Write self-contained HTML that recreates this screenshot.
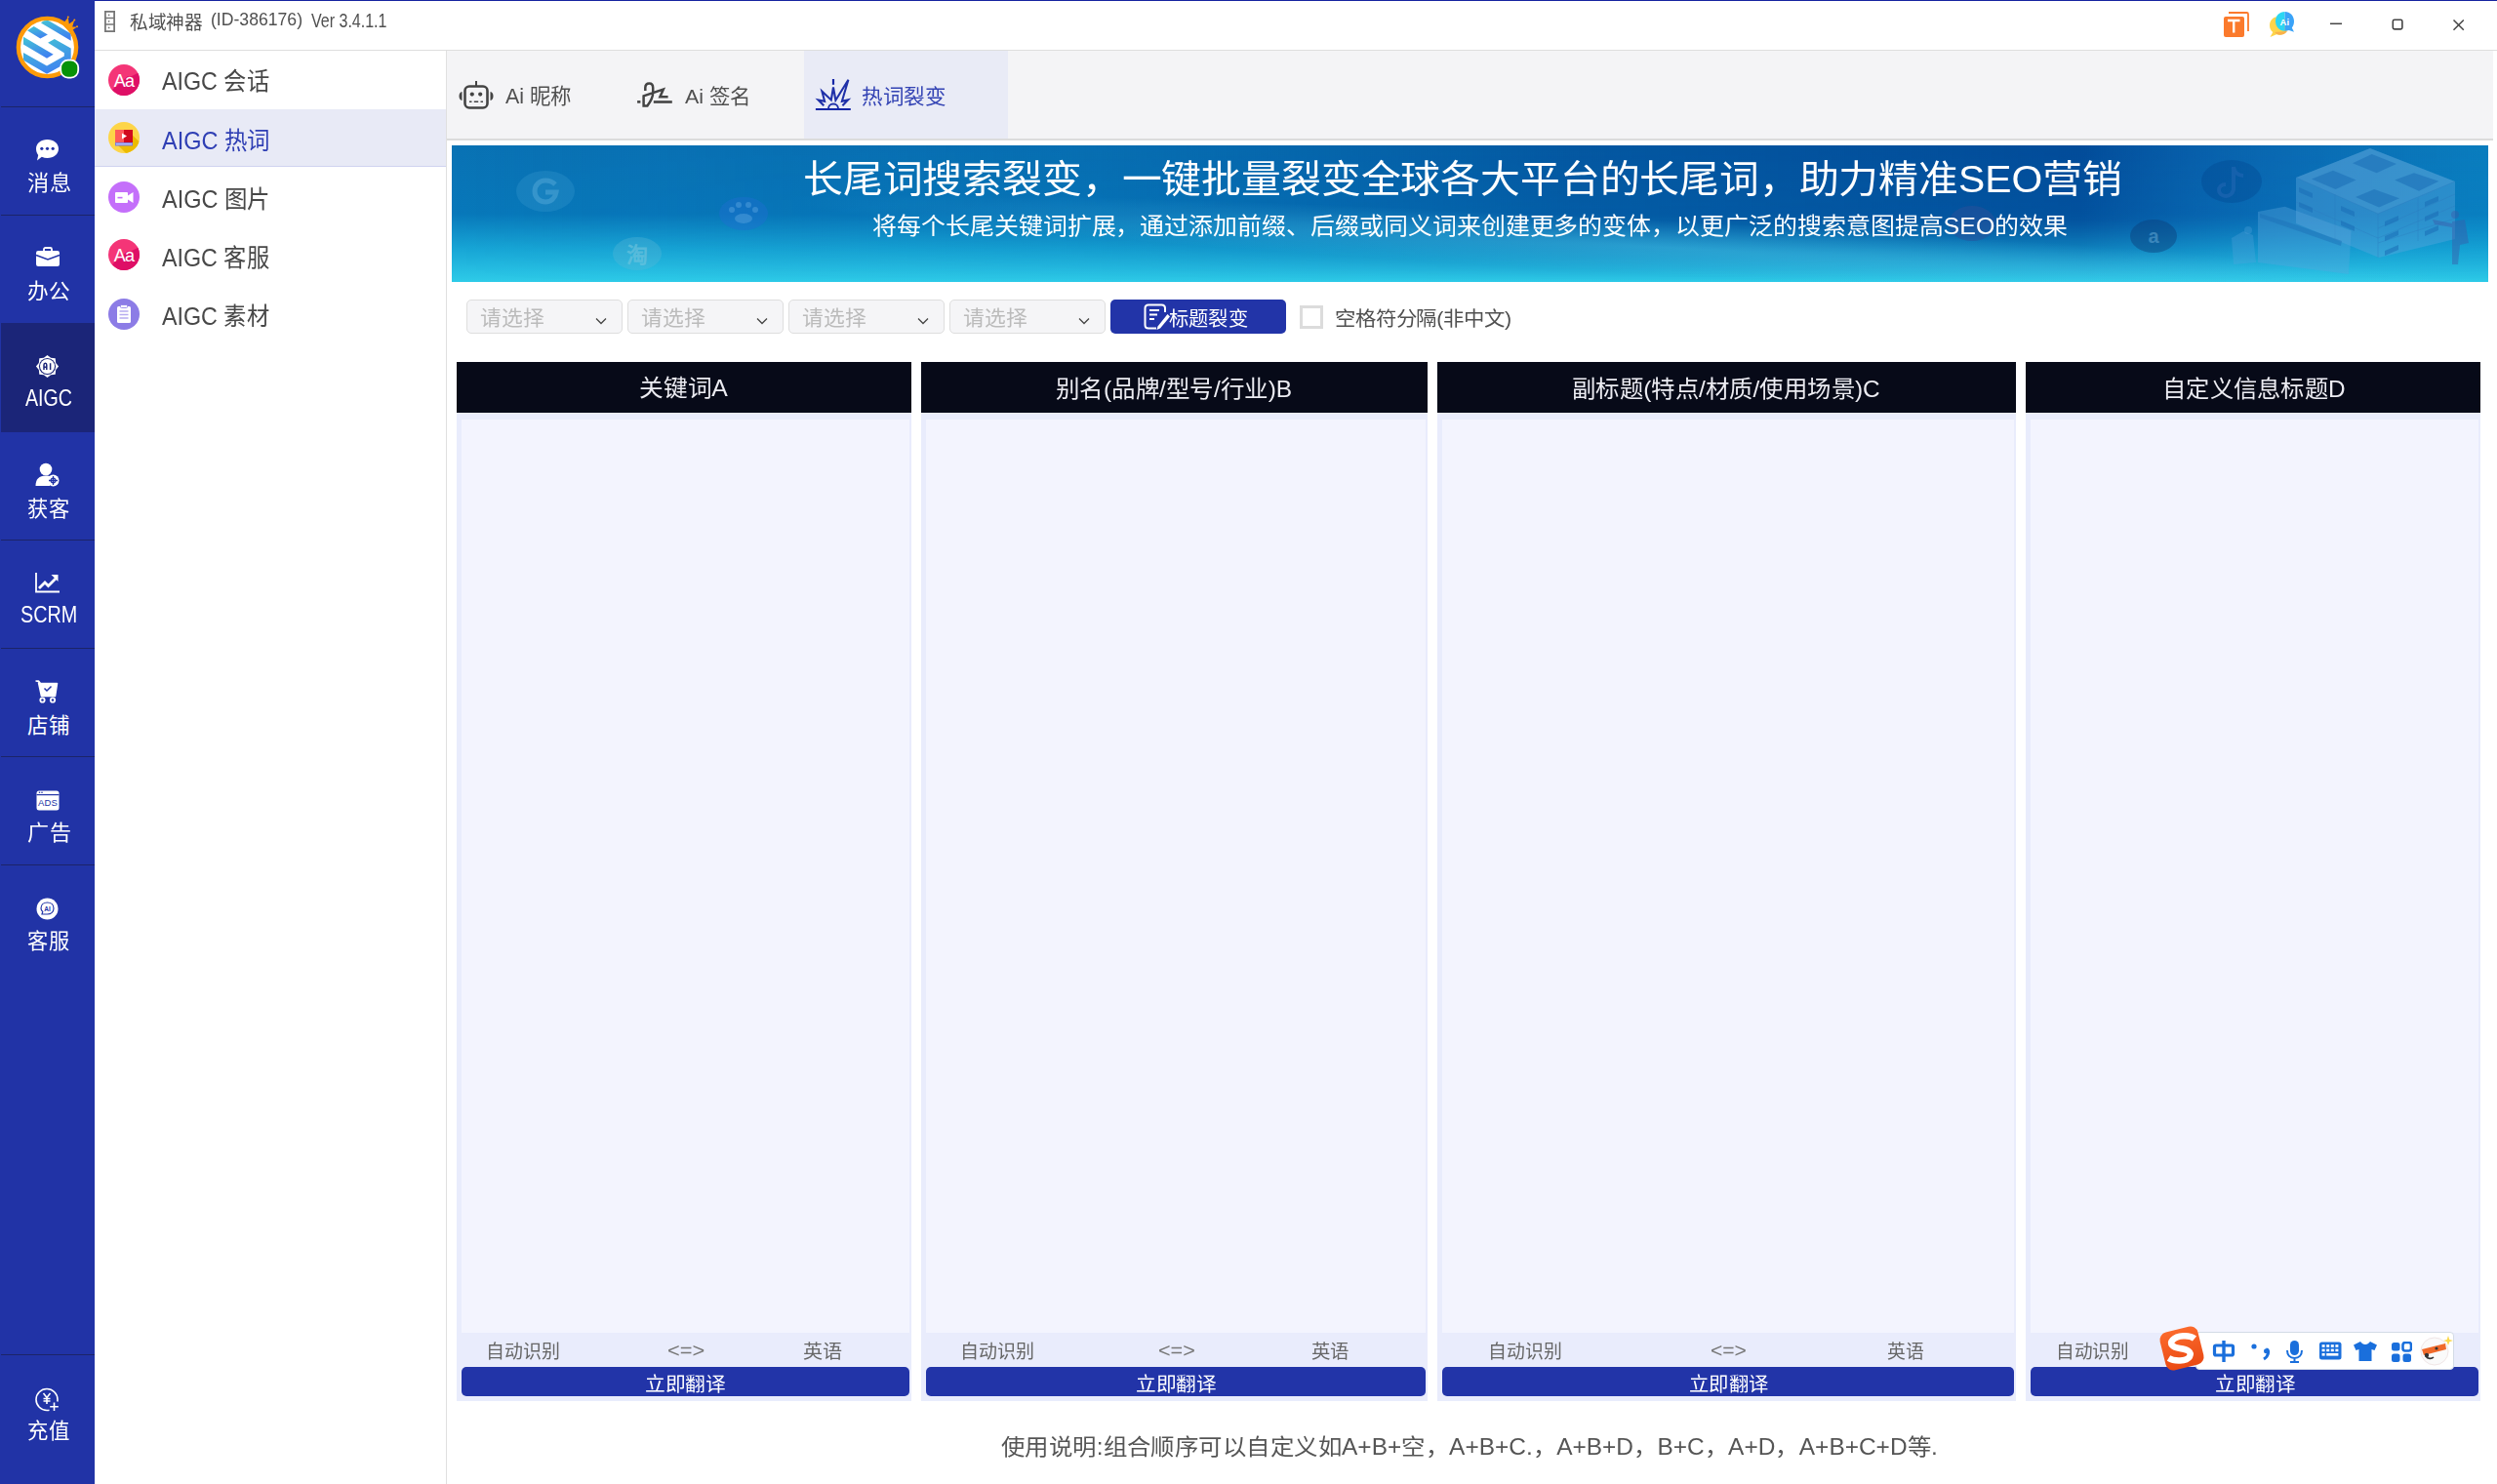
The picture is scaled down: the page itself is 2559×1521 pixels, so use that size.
<!DOCTYPE html>
<html lang="zh-CN"><head><meta charset="utf-8">
<style>
*{margin:0;padding:0;box-sizing:border-box}
html,body{width:2559px;height:1521px;overflow:hidden;background:#fff;font-family:"Liberation Sans",sans-serif;position:relative}
.abs{position:absolute}
svg{display:block}
#side{left:0;top:0;width:97px;height:1521px;background:#2133a6}
.sep{position:absolute;left:1px;width:96px;height:1px;background:#1c2468}
#side .lbl{position:absolute;left:0;width:97px;font-size:22px;line-height:26px;color:#fff;text-align:center;white-space:nowrap}
#topline{left:97px;top:0;width:2462px;height:1px;background:#1624a0}
#title{left:134px;top:9px;font-size:19px;line-height:24px;color:#444;white-space:nowrap}
#titlesep{left:97px;top:51px;width:2462px;height:1px;background:#dedede}
#sub{left:97px;top:52px;width:361px;height:1469px;background:#fff;border-right:1px solid #e0e0e0}
.si{position:absolute;left:0;width:360px;height:60px}
.si .t{position:absolute;left:69px;font-size:26px;line-height:30px;color:#383838;white-space:nowrap}
#tabs{left:458px;top:52px;width:2097px;height:92px;background:#f4f4f6;border-bottom:2px solid #dcdcdc}
.tab .t{position:absolute;font-size:22px;line-height:26px;color:#444;white-space:nowrap}
#banner{left:463px;top:149px;width:2087px;height:140px;background:linear-gradient(180deg,#0060a8 0%,#0672b4 40%,#14a0d2 78%,#2cc6e4 100%);overflow:hidden}
.sel{position:absolute;top:307px;width:160px;height:35px;border:1px solid #dedede;border-radius:5px;background:#f5f5f7}
.sel .t{position:absolute;left:15px;top:4px;font-size:21px;line-height:26px;color:#b0b0b0;white-space:nowrap}
.sel svg{position:absolute;left:131px;top:17px}
.col{position:absolute;top:371px;height:1065px;background:#e9ecfc}
.col .hd{position:absolute;left:0;top:0;right:0;height:52px;background:#070a18;color:#fff;font-size:24px;text-align:center;line-height:52px;white-space:nowrap}
.col .ta{position:absolute;left:5px;right:2px;top:59px;height:936px;background:#f3f4fe}
.col .lang{position:absolute;top:1004px;font-size:19px;line-height:22px;color:#555;white-space:nowrap}
.col .btn{position:absolute;left:5px;right:2px;top:1030px;height:30px;background:#2234a8;border-radius:5px;color:#fff;font-size:21px;text-align:center;line-height:30px;white-space:nowrap}
#foot{left:458px;top:1468px;width:2101px;text-align:center;font-size:24px;line-height:28px;color:#484848;white-space:nowrap}
.tx{position:absolute;line-height:1;white-space:nowrap;transform-origin:0 0}
</style></head><body>
<div id="side" class="abs">
 <svg class="abs" style="left:0;top:0" width="97" height="100" viewBox="0 0 97 100">
  <defs><linearGradient id="lg1" x1="0.3" y1="0" x2="0.7" y2="1"><stop offset="0" stop-color="#43c0d6"/><stop offset="1" stop-color="#3f7ef2"/></linearGradient>
  <clipPath id="cc"><circle cx="48.5" cy="48.5" r="27.6"/></clipPath></defs>
  <circle cx="48.5" cy="48.5" r="29.6" fill="#fff" stroke="#fd9a08" stroke-width="4.4"/>
  <g clip-path="url(#cc)" fill="url(#lg1)">
   <polygon points="42,23.6 47,19.5 72.7,34.5 72.7,41.8"/>
   <polygon points="28,31.3 34.7,27.1 48.9,35.4 41.4,39.6"/>
   <polygon points="24,37.8 54.7,55.8 48,59.8 24,45.6"/>
   <polygon points="24,54 48,67.6 65.8,57.6 65.8,54.3 49.1,43.8 55.8,40 72.7,49.4 72.7,62 48,75.8 24,61.8"/>
  </g>
  <path d="M64,25 L69.8,17.8 L70.8,24.5 L76.3,20.6 L74.2,27.5 L79,27.4 L71.5,33 Z" fill="#fd9a08"/>
  <circle cx="69.8" cy="17.4" r="1.0" fill="#fd9a08"/><circle cx="76.3" cy="20.4" r="1.0" fill="#fd9a08"/><circle cx="79" cy="27.3" r="1.0" fill="#fd9a08"/>
  <rect x="62.2" y="61.6" width="18" height="18" rx="7.5" fill="#079207" stroke="#fff" stroke-width="1.8"/>
 </svg>
 <div class="sep" style="top:109px"></div>
 <div class="sep" style="top:220px"></div>
 <div class="abs" style="left:1px;top:331px;width:96px;height:112px;background:#1b2578"></div>
 <div class="sep" style="top:553px"></div>
 <div class="sep" style="top:664px"></div>
 <div class="sep" style="top:775px"></div>
 <div class="sep" style="top:886px"></div>
 <div class="sep" style="top:1388px"></div>
 <!-- 消息 -->
 <svg class="abs" style="left:36px;top:142px" width="25" height="23" viewBox="0 0 25 23"><path d="M12.5,1 C19,1 24,5 24,10.5 C24,16 19,20 12.5,20 C10.5,20 8.5,19.6 6.8,18.8 L2,22.5 L3.2,17 C1.8,15.3 1,13 1,10.5 C1,5 6,1 12.5,1 Z" fill="#fff"/><circle cx="6.8" cy="10.3" r="1.6" fill="#2133a6"/><circle cx="12.5" cy="10.3" r="1.6" fill="#2133a6"/><circle cx="18.2" cy="10.3" r="1.6" fill="#2133a6"/></svg>
 <!-- 办公 -->
 <svg class="abs" style="left:36px;top:253px" width="26" height="21" viewBox="0 0 26 21"><path d="M9,4 V2.5 C9,1.5 9.7,1 10.5,1 H15.5 C16.3,1 17,1.5 17,2.5 V4" fill="none" stroke="#fff" stroke-width="1.8"/><rect x="1" y="4" width="24" height="16" rx="2.2" fill="#fff"/><path d="M1,8.5 L13,13 L25,8.5" fill="none" stroke="#2133a6" stroke-width="1.4"/></svg>
 <!-- AIGC -->
 <svg class="abs" style="left:32px;top:358px" width="34" height="34" viewBox="0 0 34 34"><polygon points="16.50,5.90 20.10,8.82 24.70,9.30 25.18,13.90 28.10,17.50 25.18,21.10 24.70,25.70 20.10,26.18 16.50,29.10 12.90,26.18 8.30,25.70 7.82,21.10 4.90,17.50 7.82,13.90 8.30,9.30 12.90,8.82" fill="#fff"/><circle cx="16.5" cy="17.5" r="8.6" fill="#1b2578"/><circle cx="16.5" cy="17.5" r="7.5" fill="#fff"/><path d="M13,21 V16 C13,14.8 13.7,14.2 14.4,14.2 C15.1,14.2 15.8,14.8 15.8,16 V21 M13,18.3 H15.8 M19.6,14.2 V21" fill="none" stroke="#1b2578" stroke-width="1.5"/></svg>
<!-- 获客 -->
 <svg class="abs" style="left:36px;top:474px" width="25" height="25" viewBox="0 0 25 25"><circle cx="11" cy="7" r="6.3" fill="#fff"/><path d="M0.5,24 C0.5,17 4,13.5 11,13.5 C13,13.5 14.5,13.8 15.8,14.4 L15,24 Z" fill="#fff"/><circle cx="18.5" cy="18.5" r="6" fill="#fff"/><path d="M18.5,14 V23 M14,18.5 H23" stroke="#2133a6" stroke-width="1.3"/><circle cx="18.5" cy="18.5" r="2.3" fill="none" stroke="#2133a6" stroke-width="1.2"/></svg>
 <!-- SCRM -->
 <svg class="abs" style="left:36px;top:587px" width="26" height="21" viewBox="0 0 26 21"><path d="M1,0 V19.5 H25" fill="none" stroke="#fff" stroke-width="1.8"/><path d="M4,16 L10,10 L13.5,13.5 L21,6" fill="none" stroke="#fff" stroke-width="2.8"/><path d="M16.5,2 H23.5 V9 Z" fill="#fff"/></svg>
 <!-- 店铺 -->
 <svg class="abs" style="left:36px;top:697px" width="24" height="24" viewBox="0 0 24 24"><path d="M0.5,1 H3.5 L5.5,3.5 H22.5 L20.5,16.5 H6.5 L3.5,2.5" fill="#fff" stroke="#fff" stroke-width="1.6" stroke-linejoin="round"/><path d="M9.5,8.5 L12,11 L16.5,6.5" fill="none" stroke="#2133a6" stroke-width="1.5"/><circle cx="7.5" cy="20.5" r="2.2" fill="#2133a6" stroke="#fff" stroke-width="1.8"/><circle cx="18" cy="20.5" r="2.2" fill="#2133a6" stroke="#fff" stroke-width="1.8"/></svg>
 <!-- 广告 -->
 <svg class="abs" style="left:37px;top:810px" width="24" height="21" viewBox="0 0 24 21"><rect x="0.5" y="0.5" width="23" height="20" rx="2.5" fill="#fff"/><rect x="0.5" y="4" width="23" height="1.2" fill="#2133a6"/><circle cx="3.5" cy="2.3" r="0.8" fill="#2133a6"/><circle cx="6" cy="2.3" r="0.8" fill="#2133a6"/><text x="12" y="16.3" font-size="9.5" text-anchor="middle" fill="#2133a6" font-family="Liberation Sans" letter-spacing="0.2">ADS</text></svg>
 <!-- 客服 -->
 <svg class="abs" style="left:37px;top:920px" width="23" height="23" viewBox="0 0 23 23"><circle cx="11.5" cy="11.5" r="11" fill="#fff"/><path d="M11.5,5 C15.5,5 18,7.7 18,11 C18,14.5 15.3,17 11.5,17 H6 L6.8,14.5 C5.6,13.5 5,12.3 5,11 C5,7.7 7.5,5 11.5,5 Z" fill="none" stroke="#2133a6" stroke-width="1.2"/><text x="11.6" y="13.8" font-size="6.5" font-weight="bold" text-anchor="middle" fill="#2133a6" font-family="Liberation Sans">AI</text></svg>
 <!-- 充值 -->
 <svg class="abs" style="left:36px;top:1422px" width="25" height="25" viewBox="0 0 25 25"><path d="M14.5,23.3 C13.7,23.5 12.9,23.5 12,23.5 C6,23.5 1,18.5 1,12.5 C1,6.5 6,1.5 12,1.5 C18,1.5 23,6.5 23,12.5 C23,13.2 23,13.9 22.8,14.5" fill="none" stroke="#fff" stroke-width="1.6"/><path d="M8.5,6 L12,10.5 L15.5,6 M12,10.5 V17 M8.5,11.5 H15.5 M8.5,14 H15.5" fill="none" stroke="#fff" stroke-width="1.6"/><path d="M19.5,15.5 V24 M15.2,19.8 H23.8" stroke="#fff" stroke-width="1.6"/></svg>
</div>
<div id="topline" class="abs"></div>
<div id="titlesep" class="abs"></div>
<svg class="abs" style="left:107px;top:11px" width="11" height="22" viewBox="0 0 11 22"><rect x="0.9" y="0.9" width="9.2" height="20.2" fill="none" stroke="#777" stroke-width="1.8"/><path d="M1,7.4 H10 M1,14 H10" stroke="#777" stroke-width="1.5"/><circle cx="4.6" cy="4.3" r="0.9" fill="#777"/><circle cx="4.6" cy="10.8" r="0.9" fill="#777"/><circle cx="4.6" cy="17.4" r="0.9" fill="#777"/></svg>
<!-- T icon -->
<svg class="abs" style="left:2278px;top:11px" width="28" height="28" viewBox="0 0 28 28"><path d="M6,2 H24.5 C25.5,2 26,2.5 26,3.5 V21" fill="none" stroke="#fb7a2c" stroke-width="1.8"/><rect x="1" y="6" width="21" height="21" rx="2" fill="#fb7a2c"/><path d="M5,10 H17.5 M11.2,10 V22.5" stroke="#fff" stroke-width="2.4"/></svg>
<!-- Ai bubble -->
<svg class="abs" style="left:2325px;top:11px" width="28" height="28" viewBox="0 0 28 28"><path d="M10,6 C4.5,6 1,10 1,15 C1,18 2.2,20.4 4.3,22 L1.5,27 L8,24.3 C9,24.6 10,24.8 11,24.8 C16.5,24.8 20,20.5 20,15 C20,10 15.5,6 10,6 Z" fill="#fdd44a"/><path d="M6,22 C7.6,23.6 9.4,24.6 11.5,24.8 C15,24.8 17.5,23.2 19,21 Z" fill="#f9b14a"/><path d="M16.5,1 C10.9,1 7,5.3 7,10.8 C7,16.3 10.9,20.8 16.5,20.8 L16.5,20.8 Z" fill="#2bd6f2"/><path d="M16.5,1 C22.1,1 26,5.3 26,10.8 C26,13.5 25.2,15.8 23.8,17.6 L26,21.8 L20.8,20 C19.4,20.5 18,20.8 16.5,20.8 Z" fill="#3aa3f8"/><text x="16.3" y="14.8" font-size="9.5" font-weight="bold" text-anchor="middle" fill="#fff" font-family="Liberation Sans">Ai</text></svg>
<!-- min/max/close -->
<svg class="abs" style="left:2386px;top:16px" width="16" height="18" viewBox="0 0 16 18"><path d="M2,8.3 H14" stroke="#444" stroke-width="1.5"/></svg>
<svg class="abs" style="left:2450px;top:18px" width="14" height="14" viewBox="0 0 14 14"><rect x="2.3" y="2.3" width="9.6" height="9.6" rx="1.6" fill="none" stroke="#444" stroke-width="1.6"/></svg>
<svg class="abs" style="left:2512px;top:18px" width="15" height="15" viewBox="0 0 15 15"><path d="M2.5,2.5 L12.8,12.8 M12.8,2.5 L2.5,12.8" stroke="#444" stroke-width="1.5"/></svg>
<div id="sub" class="abs"></div>
<div class="abs" style="left:97px;top:112px;width:360px;height:59px;background:#e8eaf6;border-bottom:1px solid #cfd3ef"></div>
<!-- icons -->
<svg class="abs" style="left:111px;top:66px" width="32" height="32" viewBox="0 0 32 32"><defs><clipPath id="c1"><circle cx="16" cy="16" r="16"/></clipPath></defs><circle cx="16" cy="16" r="16" fill="#f43577"/><path d="M16,16 L32,32 L32,8 Z M4,26 L24,44 L40,30 L20,12 Z" fill="#de0f66" clip-path="url(#c1)"/><text x="16" y="22.5" font-size="18" text-anchor="middle" fill="#fff" font-family="Liberation Sans" letter-spacing="-0.8">Aa</text></svg>
<svg class="abs" style="left:111px;top:125px" width="32" height="32" viewBox="0 0 32 32"><defs><clipPath id="c2"><circle cx="16" cy="16" r="16"/></clipPath></defs><circle cx="16" cy="16" r="16" fill="#fdd548"/><path d="M20,9 L40,28 L26,40 L8,22 Z" fill="#ecbb00" clip-path="url(#c2)"/><rect x="7" y="8" width="18" height="13" fill="#fe5a5a"/><rect x="16" y="8" width="9" height="13" fill="#d10a1e"/><path d="M14,11.5 L19,14.5 L14,17.5 Z" fill="#fff"/><rect x="7" y="21" width="18" height="3.5" fill="#7a7ee0"/><rect x="8" y="22" width="16" height="1.4" fill="#b9bdf5"/></svg>
<svg class="abs" style="left:111px;top:186px" width="32" height="32" viewBox="0 0 32 32"><circle cx="16" cy="16" r="16" fill="#c46ffa"/><rect x="7" y="11" width="13" height="11" rx="1" fill="#fff"/><path d="M20,14.5 L25.5,11 V22 L20,18.5 Z" fill="#fff"/><rect x="9.5" y="15.8" width="5" height="1.6" fill="#c46ffa"/></svg>
<svg class="abs" style="left:111px;top:245px" width="32" height="32" viewBox="0 0 32 32"><defs><clipPath id="c4"><circle cx="16" cy="16" r="16"/></clipPath></defs><circle cx="16" cy="16" r="16" fill="#f43577"/><path d="M16,16 L32,32 L32,8 Z M4,26 L24,44 L40,30 L20,12 Z" fill="#de0f66" clip-path="url(#c4)"/><text x="16" y="22.5" font-size="18" text-anchor="middle" fill="#fff" font-family="Liberation Sans" letter-spacing="-0.8">Aa</text></svg>
<svg class="abs" style="left:111px;top:306px" width="32" height="32" viewBox="0 0 32 32"><circle cx="16" cy="16" r="16" fill="#8c7ce6"/><rect x="9" y="8" width="14" height="17" rx="1.5" fill="#fff"/><rect x="12.5" y="6.5" width="7" height="3" rx="1" fill="#fff" stroke="#8c7ce6" stroke-width="0.8"/><path d="M11.5,13 H20.5 M11.5,16.5 H20.5 M11.5,20 H20.5" stroke="#b7acf0" stroke-width="1.3"/></svg>
<div id="tabs" class="abs"></div>
<div class="abs" style="left:824px;top:52px;width:209px;height:90px;background:#e9ebf6"></div>
<!-- robot -->
<svg class="abs" style="left:469px;top:82px" width="38" height="30" viewBox="0 0 38 30"><path d="M19,1 V6" stroke="#444" stroke-width="2"/><rect x="7.5" y="6.5" width="23" height="22" rx="4.5" fill="none" stroke="#444" stroke-width="2.6"/><path d="M4.5,12 C2.5,12.5 1.5,14 1.5,16.5 C1.5,19 2.5,20.5 4.5,21 Z M33.5,12 C35.5,12.5 36.5,14 36.5,16.5 C36.5,19 35.5,20.5 33.5,21 Z" fill="#444"/><circle cx="14.8" cy="14.6" r="2.1" fill="#444"/><circle cx="23.2" cy="14.6" r="2.1" fill="#444"/><path d="M12,22.2 H14.5 M16.8,22.2 H21.2 M23.5,22.2 H26" stroke="#444" stroke-width="1.5"/></svg>
<!-- signature -->
<svg class="abs" style="left:648px;top:78px" width="48" height="38" viewBox="0 0 48 38"><rect x="5.1" y="25.1" width="3.3" height="2.6" fill="#444"/><path d="M13.3,15 V12 C13.3,9 15,7.4 17.4,7.4 C20,7.4 21.2,9.5 21.2,12 V17 C21.2,21 18,27 15.4,30.5 H11.6 V20.3 L31.8,13.6 L28.4,21.2 H36.6" fill="none" stroke="#444" stroke-width="2.5" stroke-linejoin="miter"/><path d="M21.8,26.5 H40.8" stroke="#444" stroke-width="2.6"/></svg>
<!-- burst -->
<svg class="abs" style="left:830px;top:76px" width="48" height="40" viewBox="0 0 48 40"><path d="M24,5 V10.8" stroke="#1526a6" stroke-width="2.2"/><path d="M14.3,32.3 L8.6,26.4 L15.1,27.8 L12.4,17.5 L21.8,26.4 L24,13.5 L26.4,26.7 L39.4,5.7 L32.9,27.8 L39.1,26.4 L33.4,32.3" fill="none" stroke="#1f30a8" stroke-width="2.1" stroke-linejoin="miter"/><path d="M18.9,35.8 C18.9,32.5 21.2,30.5 24,30.5 C26.8,30.5 29.1,32.5 29.1,35.8" fill="none" stroke="#1f30a8" stroke-width="1.9"/><path d="M5.9,36 H41.8" stroke="#1526a6" stroke-width="2.2"/></svg>
<div id="banner" class="abs">
<svg width="2087" height="140" viewBox="0 0 2087 140" style="position:absolute;left:0;top:0">
 <defs>
  <linearGradient id="bg1" x1="0" y1="0" x2="0" y2="1">
   <stop offset="0" stop-color="#0a72b4"/><stop offset="0.5" stop-color="#0878ba"/><stop offset="0.76" stop-color="#18a6d6"/><stop offset="1" stop-color="#2ecbe8"/>
  </linearGradient>
  <linearGradient id="bg2" x1="0" y1="0" x2="1" y2="0">
   <stop offset="0" stop-color="#0062aa" stop-opacity="0"/><stop offset="0.3" stop-color="#0062aa" stop-opacity="0.25"/><stop offset="0.55" stop-color="#004594" stop-opacity="0.6"/><stop offset="0.8" stop-color="#003f90" stop-opacity="0.75"/><stop offset="0.9" stop-color="#0a5cb0" stop-opacity="0.4"/><stop offset="1" stop-color="#0a90d0" stop-opacity="0.35"/>
  </linearGradient>
  <linearGradient id="bg3" x1="0" y1="0" x2="0" y2="1">
   <stop offset="0" stop-color="#fff" stop-opacity="1"/><stop offset="0.55" stop-color="#fff" stop-opacity="0.9"/><stop offset="1" stop-color="#fff" stop-opacity="0"/>
  </linearGradient>
  <mask id="m1"><rect width="2087" height="140" fill="url(#bg3)"/></mask>
  <radialGradient id="wave" cx="0.5" cy="0.5" r="0.5"><stop offset="0" stop-color="#5ad0f0" stop-opacity="0.35"/><stop offset="1" stop-color="#5ad0f0" stop-opacity="0"/></radialGradient>
 </defs>
 <rect width="2087" height="140" fill="url(#bg1)"/>
 <rect width="2087" height="140" fill="url(#bg2)" mask="url(#m1)"/>
 <ellipse cx="1250" cy="105" rx="900" ry="28" fill="url(#wave)" transform="rotate(3 1250 105)"/>
 <!-- google -->
 <ellipse cx="96" cy="47" rx="30" ry="21" fill="#3a9ad0" fill-opacity="0.3"/>
 <path d="M106,40 C103,37 100,36 96,36 C89.5,36 85,41 85,47 C85,53 89.5,58 96,58 C102,58 106,54 107,48 H96" fill="none" stroke="#5aaedc" stroke-opacity="0.45" stroke-width="5"/>
<!-- baidu -->
 <ellipse cx="299" cy="70" rx="25" ry="17" fill="#1f6fd0" fill-opacity="0.45"/>
 <g fill="#4a9ad8" fill-opacity="0.6"><circle cx="287" cy="66" r="3"/><circle cx="294" cy="61" r="3"/><circle cx="304" cy="61" r="3"/><circle cx="311" cy="66" r="3"/><ellipse cx="299" cy="75" rx="9" ry="5"/></g>
 <!-- taobao -->
 <ellipse cx="190" cy="111" rx="25" ry="17" fill="#5ab8d8" fill-opacity="0.35"/>
 <text x="190" y="120" font-size="22" text-anchor="middle" fill="#7ac8e0" fill-opacity="0.55" font-family="Liberation Sans" font-weight="bold">淘</text>
 <!-- dark circle near SEO -->
 <ellipse cx="1558" cy="80" rx="24" ry="18" fill="#2a4f9a" fill-opacity="0.5"/>
 <!-- amazon -->
 <ellipse cx="1744" cy="93" rx="24" ry="17" fill="#0a3f7a" fill-opacity="0.45"/>
 <text x="1744" y="100" font-size="20" text-anchor="middle" fill="#5aa0d0" fill-opacity="0.6" font-family="Liberation Sans" font-weight="bold">a</text>
 <!-- tiktok -->
 <ellipse cx="1824" cy="37" rx="31" ry="22" fill="#003f88" fill-opacity="0.3"/>
 <path d="M1826,22 V44 C1826,49 1822,52 1818,52 C1814,52 1811,49 1811,46 C1811,42 1814,40 1818,40 M1826,22 C1827,28 1831,31 1836,31" fill="none" stroke="#2a6ab8" stroke-opacity="0.45" stroke-width="4"/>
 <!-- server illustration -->
 <g fill="#5aa6de" fill-opacity="0.42">
  <polygon points="1890,33 1966,3 2053,37 2053,96 1975,115 1890,80"/>
 </g>
 <g fill="#7ab8e6" fill-opacity="0.18">
  <polygon points="1890,33 1966,3 2053,37 1974,70"/>
 </g>
 <g fill="none" stroke="#2a78be" stroke-opacity="0.35" stroke-width="1">
  <path d="M1890,33 L1974,70 L2053,37 M1974,70 V115 M1930,50 V98 M2015,54 V98 M1890,58 L1974,95 L2053,62 M1974,85 L2053,50 M1974,100 L2053,75"/>
 </g>
 <g fill="#1a6eb6" fill-opacity="0.55">
  <polygon points="1906,34.4 1928,25.7 1951.6,35.6 1930.5,44.9"/>
  <polygon points="1948,18.3 1967.7,9 1993,18.9 1972.6,28.2"/>
  <polygon points="1991.2,35.6 2011,28.2 2036.4,36.8 2016,46.7"/>
  <polygon points="1951,52.9 1970.2,44.9 1996,54.2 1975,63.4"/>
  <polygon points="1893,43 1907,49 1907,54 1893,48"/><polygon points="1893,58 1907,64 1907,69 1893,63"/>
  <polygon points="1936,62 1950,68 1950,73 1936,67"/><polygon points="1936,77 1950,83 1950,88 1936,82"/>
  <polygon points="1981,78 1995,72 1995,77 1981,83"/><polygon points="1981,93 1995,87 1995,92 1981,98"/><polygon points="1981,108 1995,102 1995,107 1981,113"/>
  <polygon points="2022,58 2036,52 2036,57 2022,63"/><polygon points="2022,73 2036,67 2036,72 2022,78"/><polygon points="2022,88 2036,82 2036,87 2022,93"/>
 </g>
 <g fill="#5aa6de" fill-opacity="0.38">
  <polygon points="1851,68 1878.6,62.8 1946.6,87.6 1944,132 1851,120"/>
 </g>
 <g fill="#1a6eb6" fill-opacity="0.45">
  <polygon points="1853,70 1880,78 1937,98 1936,103 1853,74"/>
 </g>
 <g fill="#5aa6de" fill-opacity="0.3">
  <polygon points="1824,95 1836,88 1846,92 1849,120 1826,122"/>
  <circle cx="1841" cy="87" r="4"/>
 </g>
 <g fill="#3a5aa8" fill-opacity="0.45">
  <polygon points="2050,78 2063,76 2067,100 2058,102 2056,122 2050,122"/>
  <polygon points="2030,76 2050,80 2050,84 2032,81"/>
  <circle cx="2053" cy="71" r="4"/>
 </g>
</svg>
</div>
<div class="sel" style="left:478px"><svg width="12" height="8" viewBox="0 0 12 8"><path d="M1,1.5 L6,6.5 L11,1.5" fill="none" stroke="#444" stroke-width="1.25"/></svg></div>
<div class="sel" style="left:643px"><svg width="12" height="8" viewBox="0 0 12 8"><path d="M1,1.5 L6,6.5 L11,1.5" fill="none" stroke="#444" stroke-width="1.25"/></svg></div>
<div class="sel" style="left:808px"><svg width="12" height="8" viewBox="0 0 12 8"><path d="M1,1.5 L6,6.5 L11,1.5" fill="none" stroke="#444" stroke-width="1.25"/></svg></div>
<div class="sel" style="left:973px"><svg width="12" height="8" viewBox="0 0 12 8"><path d="M1,1.5 L6,6.5 L11,1.5" fill="none" stroke="#444" stroke-width="1.25"/></svg></div>
<div class="abs" style="left:1138px;top:307px;width:180px;height:35px;background:#2234a8;border-radius:5px"></div>
<svg class="abs" style="left:1172px;top:311px" width="28" height="28" viewBox="0 0 28 28"><path d="M13,25.5 H5 C2.8,25.5 1.5,24.2 1.5,22 V5 C1.5,2.8 2.8,1.5 5,1.5 H18.5 C20.7,1.5 22,2.8 22,5 V9" fill="none" stroke="#fff" stroke-width="2"/><path d="M6,7 H16 M6,11.5 H14 M6,16 H11" stroke="#fff" stroke-width="1.8"/><path d="M24.5,11 L27,13.5 L17,25.5 L13.5,27 L14.5,23.5 Z" fill="#fff"/></svg>
<div class="abs" style="left:1332px;top:313px;width:24px;height:24px;border:3px solid #dcdcdc;background:#fff"></div>
<div class="col" style="left:468px;width:466px"><div class="hd"></div><div class="ta"></div><div class="btn"></div></div>
<div class="col" style="left:944px;width:519px"><div class="hd"></div><div class="ta"></div><div class="btn"></div></div>
<div class="col" style="left:1473px;width:593px"><div class="hd"></div><div class="ta"></div><div class="btn"></div></div>
<div class="col" style="left:2076px;width:466px"><div class="hd"></div><div class="ta"></div><div class="btn"></div></div>
<div class="abs" style="left:2250px;top:1365px;width:265px;height:39px;background:#fff;border:1px solid #d3dbe6;border-radius:4px"></div>
<svg class="abs" style="left:2210px;top:1357px" width="52" height="50" viewBox="0 0 52 50"><defs><linearGradient id="sg" x1="0" y1="0" x2="0" y2="1"><stop offset="0" stop-color="#fb6a2c"/><stop offset="1" stop-color="#ea4a14"/></linearGradient></defs><rect x="6" y="5" width="40" height="40" rx="8" fill="url(#sg)" transform="rotate(-14 26 25)"/><path d="M39,15 C34,10.8 21,11.5 16.5,16.5 C13,20.5 16.5,24 24,25 C32,26 36.5,28.5 34,33.5 C31,38.5 18,38.5 12.5,35" fill="none" stroke="#fff" stroke-width="6.4" stroke-linecap="butt"/></svg>
<svg class="abs" style="left:2267px;top:1373px" width="24" height="24" viewBox="0 0 24 24"><rect x="2.5" y="6" width="19" height="10" rx="1.5" fill="none" stroke="#1a6fdc" stroke-width="3.2"/><path d="M12,1 V23" stroke="#1a6fdc" stroke-width="3.4"/></svg>
<svg class="abs" style="left:2306px;top:1375px" width="22" height="20" viewBox="0 0 22 20"><circle cx="4" cy="5" r="2.6" fill="#1a6fdc"/><path d="M16.5,8 C18.5,8 19,10 18.5,12 C18,14.5 16.5,16.5 14,18" fill="none" stroke="#1a6fdc" stroke-width="3"/><circle cx="16.5" cy="9.8" r="2.5" fill="#1a6fdc"/></svg>
<svg class="abs" style="left:2342px;top:1373px" width="19" height="24" viewBox="0 0 19 24"><rect x="5" y="1" width="9" height="15" rx="4.5" fill="#1a6fdc"/><path d="M2,11 C2,16 5,19 9.5,19 C14,19 17,16 17,11 M9.5,19 V23 M5,23 H14" fill="none" stroke="#1a6fdc" stroke-width="2"/></svg>
<svg class="abs" style="left:2376px;top:1375px" width="24" height="19" viewBox="0 0 24 19"><rect x="1" y="0.5" width="22.5" height="18" rx="2.5" fill="#1a6fdc"/><g fill="#fff"><rect x="3.6" y="3.2" width="3" height="2.6"/><rect x="8.2" y="3.2" width="3" height="2.6"/><rect x="12.8" y="3.2" width="3" height="2.6"/><rect x="17.4" y="3.2" width="3" height="2.6"/><rect x="3.6" y="7.6" width="3" height="2.6"/><rect x="8.2" y="7.6" width="3" height="2.6"/><rect x="12.8" y="7.6" width="3" height="2.6"/><rect x="17.4" y="7.6" width="3" height="2.6"/><rect x="3.6" y="12" width="3" height="2.6"/><rect x="8.2" y="12" width="12.2" height="2.6"/></g></svg>
<svg class="abs" style="left:2411px;top:1374px" width="26" height="22" viewBox="0 0 26 22"><path d="M8,1 C9.5,3 11,4 13,4 C15,4 16.5,3 18,1 L25,4.5 L22.5,10 L19.5,9 V21 H6.5 V9 L3.5,10 L1,4.5 Z" fill="#1a6fdc"/></svg>
<svg class="abs" style="left:2450px;top:1375px" width="22" height="22" viewBox="0 0 22 22"><rect x="1" y="1" width="8.5" height="8.5" rx="2.5" fill="#1a6fdc"/><rect x="12.5" y="1" width="8.5" height="8.5" rx="2.5" fill="none" stroke="#1a6fdc" stroke-width="2.6"/><rect x="1" y="12.5" width="8.5" height="8.5" rx="2.5" fill="#1a6fdc"/><rect x="12.5" y="12.5" width="8.5" height="8.5" rx="2.5" fill="#1a6fdc"/></svg>
<svg class="abs" style="left:2478px;top:1366px" width="36" height="34" viewBox="0 0 36 34"><circle cx="17" cy="19" r="14" fill="#fafafa" stroke="#f0e6e6" stroke-width="1"/><path d="M4,17 L28,11 L29,17 L6,23 Z" fill="#f06a2a"/><circle cx="19" cy="16" r="1.6" fill="#333"/><path d="M8,24 C10,27 14,27 16,25" fill="none" stroke="#333" stroke-width="1.6"/><circle cx="9" cy="23" r="2.2" fill="#333"/><path d="M31,3 L32.3,7 L36,8 L32.3,9.2 L31,13 L29.7,9.2 L26,8 L29.7,7 Z" fill="#fcd84a"/></svg>
<span class="tx" style="left:133.0px;top:14px;font-size:19px;color:#505050;transform:scaleX(0.9824)">私域神器</span>
<span class="tx" style="left:215.5px;top:10.2px;font-size:19px;color:#505050;transform:scaleX(0.9273)">(ID-386176)</span>
<span class="tx" style="left:319.0px;top:12.4px;font-size:19.5px;color:#505050;transform:scaleX(0.8213)">Ver 3.4.1.1</span>
<span class="tx" style="left:27.6px;top:178px;font-size:21.5px;color:#fff;transform:scaleX(1.0341)">消息</span>
<span class="tx" style="left:27.7px;top:289.4px;font-size:21.5px;color:#fff;transform:scaleX(1.0073)">办公</span>
<span class="tx" style="left:25.6px;top:396px;font-size:24px;color:#fff;transform:scaleX(0.819)">AIGC</span>
<span class="tx" style="left:27.6px;top:511.6px;font-size:21.5px;color:#fff;transform:scaleX(0.9881)">获客</span>
<span class="tx" style="left:21.4px;top:618.9px;font-size:23.5px;color:#fff;transform:scaleX(0.8409)">SCRM</span>
<span class="tx" style="left:27.6px;top:733.5px;font-size:21.5px;color:#fff;transform:scaleX(1.0)">店铺</span>
<span class="tx" style="left:27.7px;top:843.8px;font-size:21.5px;color:#fff;transform:scaleX(1.0268)">广告</span>
<span class="tx" style="left:27.9px;top:955px;font-size:21.5px;color:#fff;transform:scaleX(0.9857)">客服</span>
<span class="tx" style="left:28.1px;top:1456.8px;font-size:21.5px;color:#fff;transform:scaleX(0.9952)">充值</span>
<span class="tx" style="left:166.0px;top:71.2px;font-size:25px;color:#484848;transform:scaleX(0.9316)">AIGC 会话</span>
<span class="tx" style="left:166.0px;top:131.5px;font-size:25px;color:#2f3fb4;transform:scaleX(0.9397)">AIGC 热词</span>
<span class="tx" style="left:166.0px;top:192.3px;font-size:25px;color:#484848;transform:scaleX(0.9397)">AIGC 图片</span>
<span class="tx" style="left:166.0px;top:252.2px;font-size:25px;color:#484848;transform:scaleX(0.9316)">AIGC 客服</span>
<span class="tx" style="left:166.0px;top:312px;font-size:25px;color:#484848;transform:scaleX(0.9316)">AIGC 素材</span>
<span class="tx" style="left:518.1px;top:87.8px;font-size:22.0px;color:#505050;transform:scaleX(0.9739)">Ai 昵称</span>
<span class="tx" style="left:702.0px;top:87.9px;font-size:21.0px;color:#505050;transform:scaleX(1.0203)">Ai 签名</span>
<span class="tx" style="left:883.3px;top:88px;font-size:21.0px;color:#3444b4;transform:scaleX(1.0268)">热词裂变</span>
<span class="tx" style="left:823.1px;top:164px;font-size:39.0px;color:#fff;transform:scaleX(1.0468)">长尾词搜索裂变，一键批量裂变全球各大平台的长尾词，助力精准SEO营销</span>
<span class="tx" style="left:893.9px;top:219.9px;font-size:24.0px;color:#fff;transform:scaleX(1.0394)">将每个长尾关键词扩展，通过添加前缀、后缀或同义词来创建更多的变体，以更广泛的搜索意图提高SEO的效果</span>
<span class="tx" style="left:492.4px;top:315.2px;font-size:21.0px;color:#bbb;transform:scaleX(1.041)">请选择</span>
<span class="tx" style="left:657.4px;top:315.2px;font-size:21.0px;color:#bbb;transform:scaleX(1.041)">请选择</span>
<span class="tx" style="left:822.4px;top:315.2px;font-size:21.0px;color:#bbb;transform:scaleX(1.041)">请选择</span>
<span class="tx" style="left:987.4px;top:315.2px;font-size:21.0px;color:#bbb;transform:scaleX(1.041)">请选择</span>
<span class="tx" style="left:1198.3px;top:317px;font-size:20.0px;color:#fff;transform:scaleX(1.0115)">标题裂变</span>
<span class="tx" style="left:1368.3px;top:317px;font-size:20.5px;color:#505050;transform:scaleX(1.0436)">空格符分隔(非中文)</span>
<span class="tx" style="left:655.3px;top:385.7px;font-size:24px;color:#ececf2;transform:scaleX(1.0314)">关键词A</span>
<span class="tx" style="left:1082.0px;top:386.7px;font-size:24px;color:#ececf2;transform:scaleX(1.0204)">别名(品牌/型号/行业)B</span>
<span class="tx" style="left:1611.2px;top:386.7px;font-size:24px;color:#ececf2;transform:scaleX(1.0162)">副标题(特点/材质/使用场景)C</span>
<span class="tx" style="left:2215.5px;top:386.8px;font-size:24px;color:#ececf2;transform:scaleX(1.0122)">自定义信息标题D</span>
<span class="tx" style="left:498.3px;top:1375.7px;font-size:19px;color:#666;transform:scaleX(0.9958)">自动识别</span>
<span class="tx" style="left:683.6px;top:1373.2px;font-size:21.0px;color:#777;transform:scaleX(1.04)">&lt;=&gt;</span>
<span class="tx" style="left:823.2px;top:1375.7px;font-size:19px;color:#666;transform:scaleX(1.0556)">英语</span>
<span class="tx" style="left:984.4px;top:1375.7px;font-size:19px;color:#666;transform:scaleX(1.0014)">自动识别</span>
<span class="tx" style="left:1187.0px;top:1373.2px;font-size:21.0px;color:#777;transform:scaleX(1.0286)">&lt;=&gt;</span>
<span class="tx" style="left:1343.9px;top:1375.7px;font-size:19px;color:#666;transform:scaleX(1.0194)">英语</span>
<span class="tx" style="left:1524.9px;top:1375.7px;font-size:19px;color:#666;transform:scaleX(0.9931)">自动识别</span>
<span class="tx" style="left:1752.5px;top:1373.2px;font-size:21.0px;color:#777;transform:scaleX(1.0029)">&lt;=&gt;</span>
<span class="tx" style="left:1934.4px;top:1375.7px;font-size:19px;color:#666;transform:scaleX(0.9889)">英语</span>
<span class="tx" style="left:2107.4px;top:1375.7px;font-size:19px;color:#666;transform:scaleX(0.9806)">自动识别</span>
<span class="tx" style="left:661.4px;top:1408.5px;font-size:20.0px;color:#fff;transform:scaleX(1.0372)">立即翻译</span>
<span class="tx" style="left:1164.0px;top:1408.5px;font-size:20.0px;color:#fff;transform:scaleX(1.0359)">立即翻译</span>
<span class="tx" style="left:1731.2px;top:1408.5px;font-size:20.0px;color:#fff;transform:scaleX(1.0179)">立即翻译</span>
<span class="tx" style="left:2270.0px;top:1408.5px;font-size:20.0px;color:#fff;transform:scaleX(1.0295)">立即翻译</span>
<span class="tx" style="left:1025.9px;top:1472.4px;font-size:23.0px;color:#555;transform:scaleX(1.0629)">使用说明:组合顺序可以自定义如A+B+空，A+B+C.，A+B+D，B+C，A+D，A+B+C+D等.</span>
</body></html>
